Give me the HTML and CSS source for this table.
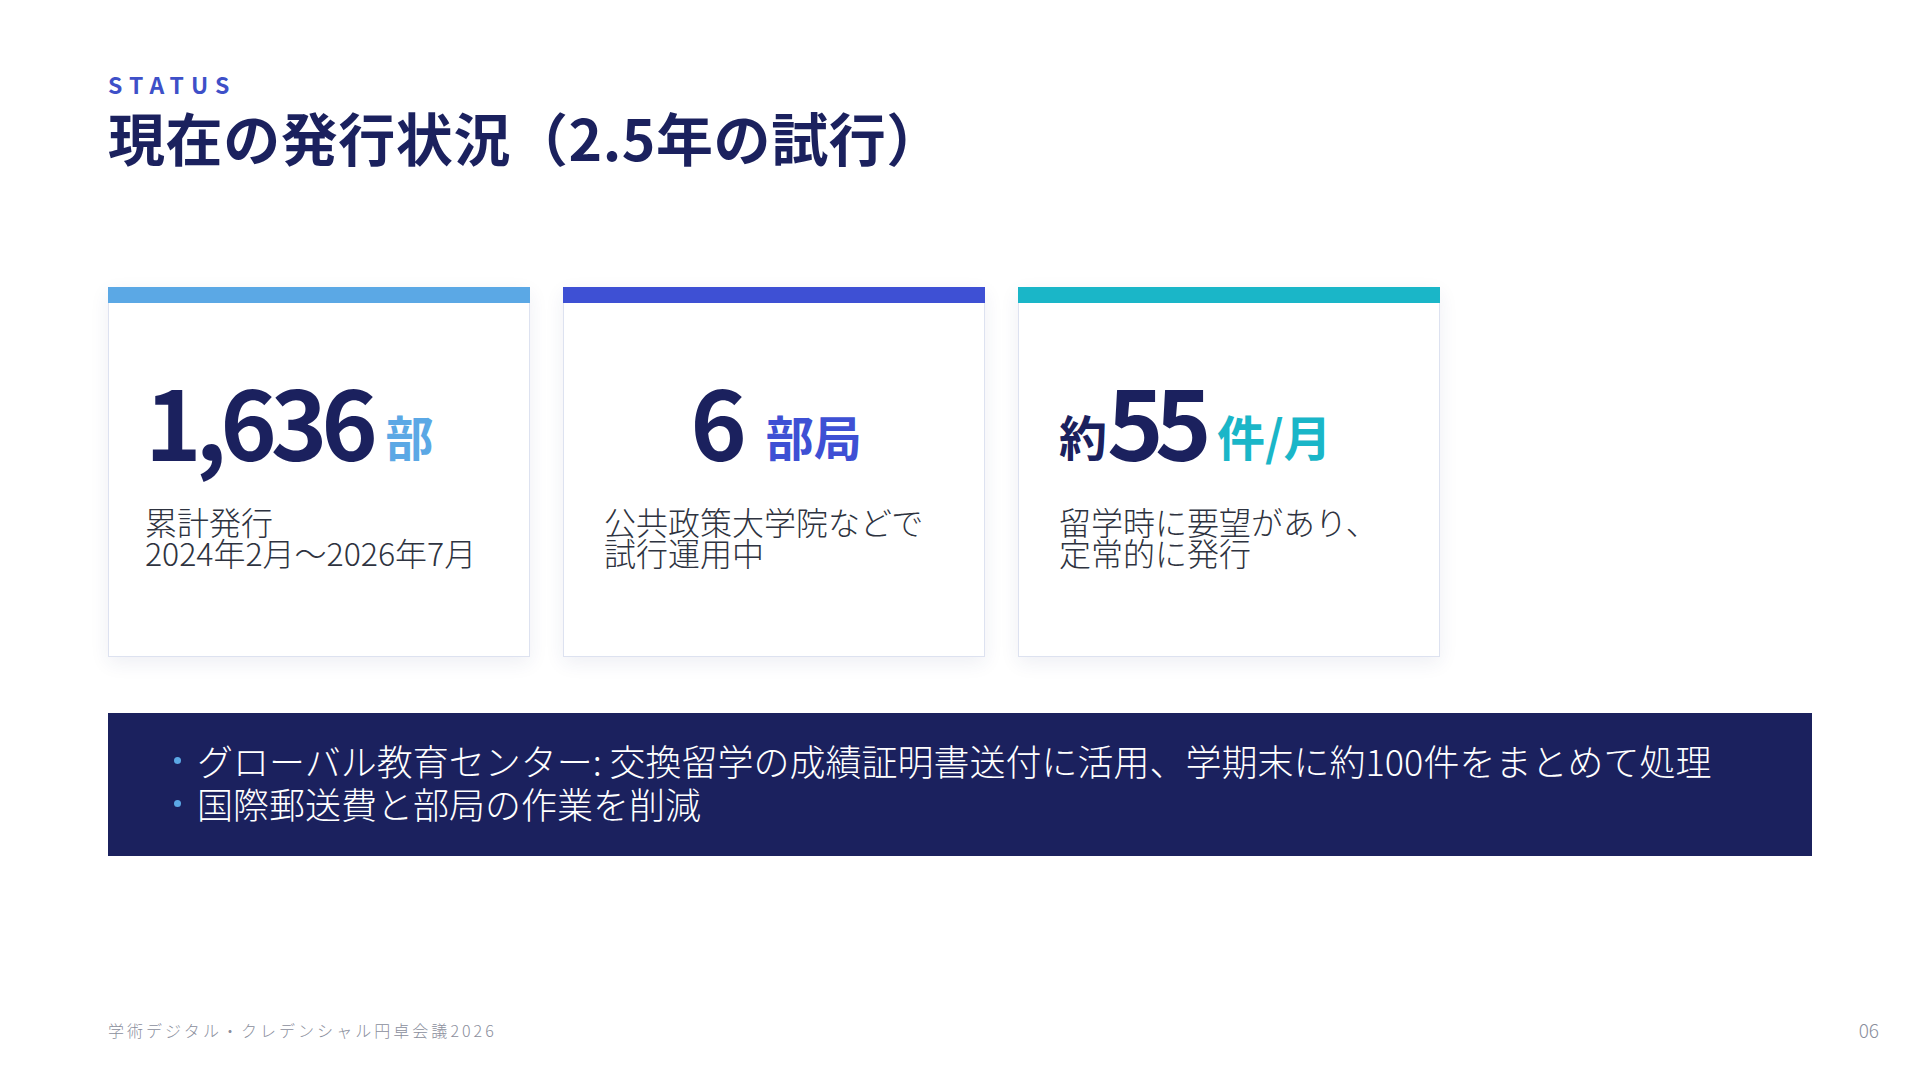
FILE: index.html
```html
<!DOCTYPE html>
<html lang="ja">
<head>
<meta charset="utf-8">
<title>現在の発行状況</title>
<link rel="stylesheet" href="styles.css">
</head>
<body>
<div class="slide">
  <main class="main">
    <div class="eyebrow">STATUS</div>
    <h1 class="title">現在の発行状況（2.5年の試行）</h1>

    <section class="cards">
      <article class="card card-sky">
        <div class="card-bar"></div>
        <div class="card-body">
          <div class="figure">
            <span class="num">1,636</span><span class="unit">部</span>
          </div>
          <p class="desc">累計発行<br>2024年2月〜2026年7月</p>
        </div>
      </article>

      <article class="card card-blue">
        <div class="card-bar"></div>
        <div class="card-body">
          <div class="figure figure-center">
            <span class="num">6</span><span class="unit unit-wide">部局</span>
          </div>
          <p class="desc">公共政策大学院などで<br>試行運用中</p>
        </div>
      </article>

      <article class="card card-teal">
        <div class="card-bar"></div>
        <div class="card-body">
          <div class="figure">
            <span class="prefix">約</span><span class="num num-tight">55</span><span class="unit">件/月</span>
          </div>
          <p class="desc">留学時に要望があり、<br>定常的に発行</p>
        </div>
      </article>
    </section>

    <section class="summary">
      <ul class="summary-list">
        <li>グローバル教育センター: 交換留学の成績証明書送付に活用、学期末に約100件をまとめて処理</li>
        <li>国際郵送費と部局の作業を削減</li>
      </ul>
    </section>
  </main>

  <footer class="footer">
    <span class="footer-title">学術デジタル・クレデンシャル円卓会議2026</span>
    <span class="page-no">06</span>
  </footer>
</div>
</body>
</html>
```

FILE: styles.css
```css
* {
  box-sizing: border-box;
}

html, body {
  margin: 0;
  padding: 0;
  background: #ffffff;
}

body {
  font-family: "Noto Sans CJK JP", "Noto Sans", sans-serif;
  color: #1b215e;
}

.slide {
  width: 1920px;
  height: 1080px;
  display: flex;
  flex-direction: column;
  background: #ffffff;
}

.main {
  padding: 73px 108px 0;
}

.eyebrow {
  font-size: 23px;
  line-height: 1;
  font-weight: 700;
  letter-spacing: 0.31em;
  color: #3e50c8;
}

.title {
  margin: 6px 0 0;
  font-size: 57px;
  line-height: 1.2;
  font-weight: 700;
  letter-spacing: 0.01em;
  color: #1b215e;
}

.cards {
  margin-top: 117px;
  display: flex;
  gap: 33px;
}

.card {
  width: 422px;
  height: 370px;
  background: #ffffff;
  border: 1px solid #dde2f0;
  box-shadow: 0 6px 18px rgba(40, 50, 120, 0.08);
  display: flex;
  flex-direction: column;
}

.card-bar {
  height: 16px;
  margin: -1px -1px 0;
}

.card-sky .card-bar { background: #5ba8e5; }
.card-blue .card-bar { background: #3e50d4; }
.card-teal .card-bar { background: #1ab6c8; }

.card-body {
  padding: 69px 36px 0;
}

.card-blue .card-body,
.card-teal .card-body {
  padding-left: 40px;
}

.figure {
  height: 96px;
  line-height: 96px;
  white-space: nowrap;
}

.figure-center {
  text-align: center;
}

.num {
  font-size: 96px;
  font-weight: 700;
  letter-spacing: -0.065em;
  color: #1b215e;
}

.num-tight {
  letter-spacing: -0.09em;
}

.prefix {
  font-size: 48px;
  font-weight: 700;
  color: #1b215e;
  vertical-align: 5px;
}

.unit {
  margin-left: 14px;
  font-size: 48px;
  font-weight: 700;
  vertical-align: 5px;
}

.unit-wide {
  margin-left: 25px;
}

.card-sky .unit { color: #5ba8e5; }
.card-blue .unit { color: #3e50d4; }
.card-teal .unit { color: #1ab6c8; }

.desc {
  margin: 38px 0 0;
  font-family: "Noto Sans CJK JP Light", "Noto Sans CJK JP DemiLight", "Noto Sans CJK JP", sans-serif;
  font-size: 32px;
  line-height: 31px;
  font-weight: 300;
  color: #2e3340;
}

.summary {
  margin-top: 56px;
  height: 143px;
  background: #1b215e;
  padding: 26px 66px 0;
}

.summary-list {
  margin: 0;
  padding: 0;
  list-style: none;
}

.summary-list li {
  display: flex;
  align-items: center;
  font-family: "Noto Sans CJK JP Light", "Noto Sans CJK JP DemiLight", "Noto Sans CJK JP", sans-serif;
  font-size: 36px;
  line-height: 43px;
  font-weight: 300;
  color: #ffffff;
}

.summary-list li::before {
  content: "";
  flex: none;
  width: 7px;
  height: 7px;
  margin-right: 16px;
  border-radius: 50%;
  background: #5ba8e5;
}

.footer {
  margin-top: auto;
  padding: 0 41px 38px 108px;
  display: flex;
  justify-content: space-between;
  align-items: center;
}

.footer-title {
  font-size: 16px;
  line-height: 24px;
  letter-spacing: 0.19em;
  font-weight: 300;
  color: #8a8e9c;
}

.page-no {
  font-size: 19px;
  line-height: 24px;
  font-weight: 300;
  color: #8a8e9c;
}
```
